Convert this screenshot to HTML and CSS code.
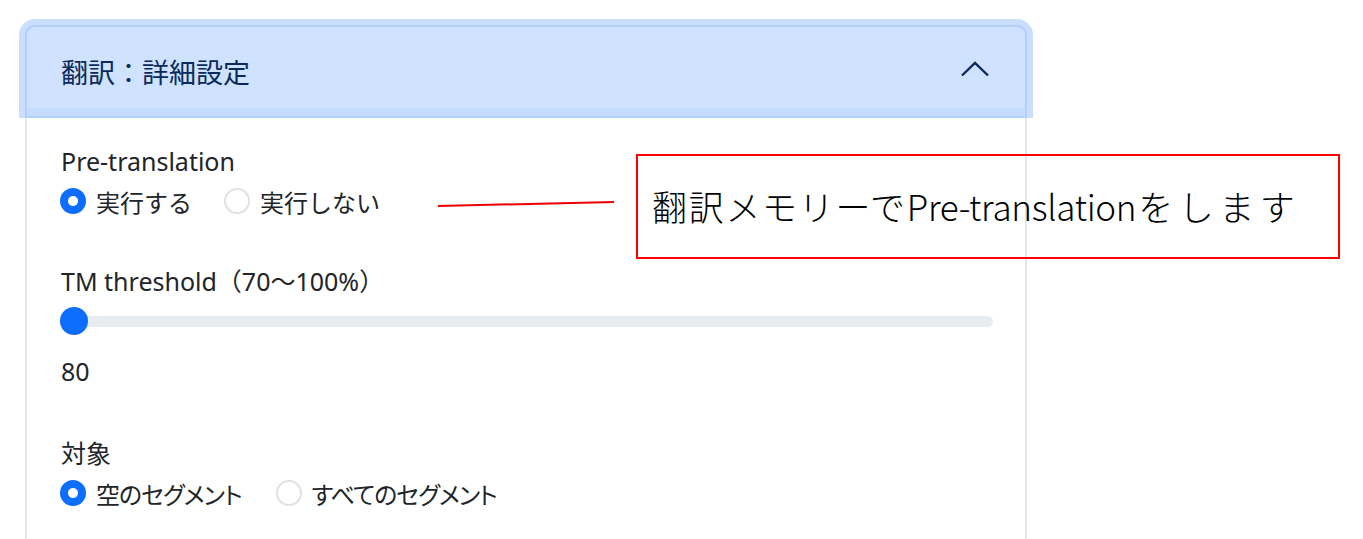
FILE: index.html
```html
<!DOCTYPE html>
<html lang="ja">
<head>
<meta charset="utf-8">
<title>翻訳：詳細設定</title>
<link rel="stylesheet" href="styles.css">
</head>
<body>
<div class="page">
  <div class="card">
    <div class="head">
      <span class="title">翻訳：詳細設定</span>
      <svg class="chev" width="30" height="18" viewBox="0 0 30 18"><path d="M2 15.5 L15 3 L28 15.5" fill="none" stroke="#0a2a5c" stroke-width="2.4"/></svg>
    </div>
    <div class="body">
      <div class="label">Pre-translation</div>
      <div class="radios">
        <label class="opt"><span class="radio on"></span>実行する</label>
        <label class="opt"><span class="radio"></span>実行しない</label>
      </div>
      <div class="label sp1">TM threshold（70～100%）</div>
      <div class="slider"><div class="track"></div><div class="thumb"></div></div>
      <div class="value">80</div>
      <div class="label sp2">対象</div>
      <div class="radios tight">
        <label class="opt"><span class="radio on"></span>空のセグメント</label>
        <label class="opt"><span class="radio"></span>すべてのセグメント</label>
      </div>
    </div>
  </div>
  <svg class="line" width="180" height="12" viewBox="0 0 180 12"><line x1="2" y1="8" x2="178" y2="4" stroke="#ee0000" stroke-width="2"/></svg>
  <div class="callout">翻訳メモリーで<span class="lat">Pre-translation</span><span class="kana">をします</span></div>
</div>
</body>
</html>
```
FILE: styles.css
```css
html, body {
  margin: 0;
  background: #ffffff;
}
body {
  color: #212529;
  font-family: "Noto Sans", "Noto Sans CJK JP", sans-serif;
}
.page {
  position: relative;
  height: 539px;
  overflow: hidden;
  padding: 25px 0 0 25px;
  box-sizing: border-box;
}
.card {
  width: 1002px;
  box-sizing: border-box;
  border: 2px solid #e3e6ea;
  border-bottom: 0;
  border-radius: 10px 10px 0 0;
  height: 600px;
}
.head {
  margin: -2px -2px 0;
  height: 93px;
  box-sizing: border-box;
  background: #cfe2ff;
  border: 2px solid #b3d0fb;
  border-radius: 10px 10px 0 0;
  box-shadow: 0 0 0 6px rgba(13, 110, 253, 0.22), inset 0 -8px 0 rgba(13, 110, 253, 0.05);
  clip-path: inset(-7px -7px 0 -7px round 14px 14px 0 0);
  display: flex;
  align-items: center;
  justify-content: space-between;
  padding: 0 35px 0 34px;
}
.title {
  font-family: "Noto Sans CJK JP", sans-serif;
  font-size: 27px;
  color: #0a2a5c;
  line-height: 40px;
}
.chev {
  margin-bottom: 6px;
}
.body {
  padding: 23px 32px 0 34px;
}
.label {
  font-size: 25px;
  line-height: 40px;
}
.sp1 { margin-top: 40px; }
.sp2 { margin-top: 42px; }
.radios {
  display: flex;
  align-items: center;
  height: 40px;
  font-size: 24px;
}
.radios.tight {
  font-feature-settings: "palt";
  letter-spacing: -1px;
}
.opt {
  display: flex;
  align-items: center;
  margin-right: 33px;
}
.tight .opt {
  margin-right: 35px;
}
.radio {
  width: 26px;
  height: 26px;
  box-sizing: border-box;
  border-radius: 50%;
  border: 2px solid #dee2e6;
  background: #fff;
  margin: 0 10px 0 -1px;
}
.radio.on {
  border-color: #0d6efd;
  background: radial-gradient(circle, #ffffff 0 4.5px, #0d6efd 5.5px);
}
.slider {
  position: relative;
  height: 40px;
  display: flex;
  align-items: center;
}
.track {
  flex: 1;
  height: 11px;
  margin-left: 1px;
  border-radius: 6px;
  background: #e9ecef;
}
.thumb {
  position: absolute;
  left: -1px;
  top: 6px;
  width: 28px;
  height: 28px;
  border-radius: 50%;
  background: #0d6efd;
}
.value {
  margin-top: 10px;
  font-size: 25px;
  line-height: 40px;
}
.line {
  position: absolute;
  left: 436px;
  top: 198px;
}
.callout {
  position: absolute;
  left: 636px;
  top: 154px;
  width: 704px;
  height: 105px;
  box-sizing: border-box;
  border: 2px solid #ff0000;
  display: flex;
  align-items: center;
  padding: 0 0 2px 14px;
  font-family: "Noto Sans CJK JP", sans-serif;
  font-weight: 300;
  font-size: 35px;
  color: #000;
  letter-spacing: 1.7px;
}
.lat {
  letter-spacing: -0.3px;
}
.kana {
  letter-spacing: 5.5px;
  margin-left: 2px;
}
```
